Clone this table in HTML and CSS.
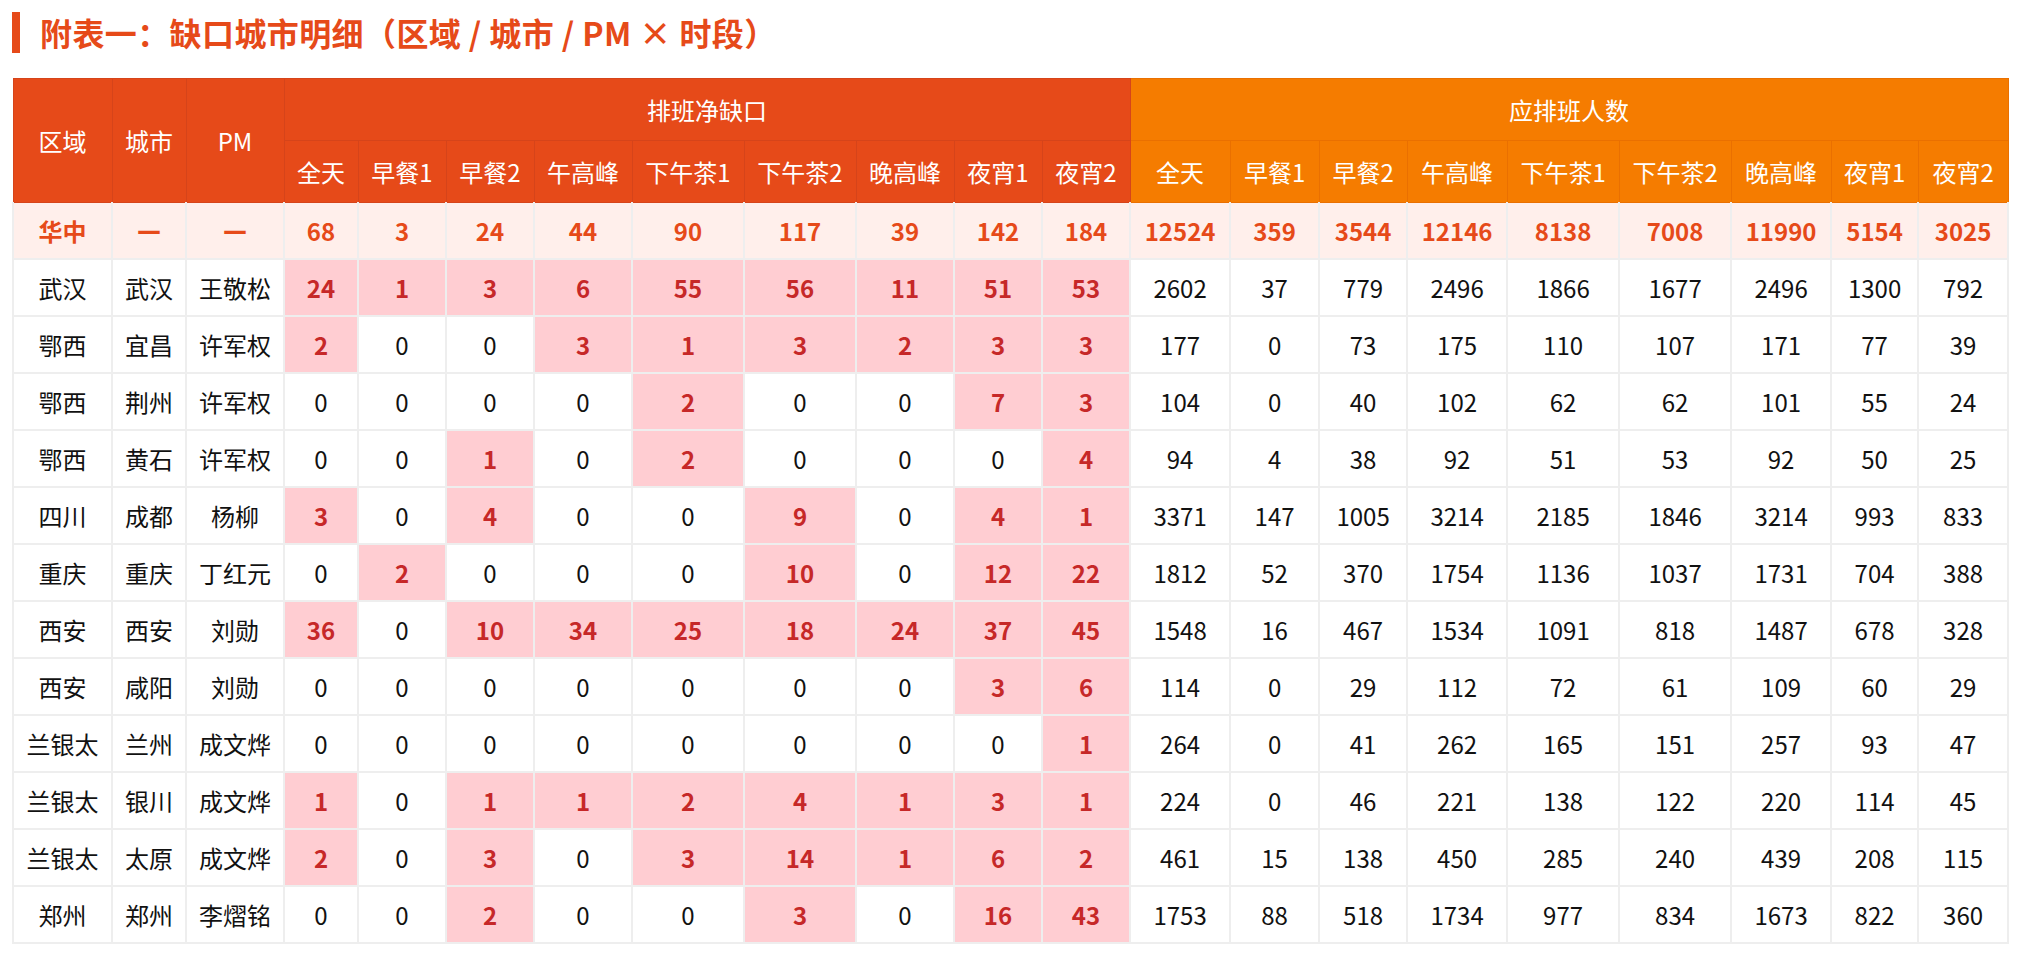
FILE: index.html
```html
<!DOCTYPE html>
<html lang="zh-CN">
<head>
<meta charset="utf-8">
<title>附表一：缺口城市明细</title>
<link rel="stylesheet" href="styles.css">
</head>
<body>
<div class="page">
  <h1 class="section-title">附表一：缺口城市明细（区域 / 城市 / PM × 时段）</h1>
  <table class="gap-table">
    <colgroup>
      <col class="w99"><col class="w74"><col class="w98">
      <col class="w74"><col class="w88"><col class="w88"><col class="w98"><col class="w112"><col class="w112"><col class="w98"><col class="w88"><col class="w88">
      <col class="w100"><col class="w89"><col class="w88"><col class="w100"><col class="w112"><col class="w112"><col class="w100"><col class="w87"><col class="w90">
    </colgroup>
    <thead>
      <tr class="head-top">
        <th class="h-red" rowspan="2">区域</th>
        <th class="h-red" rowspan="2">城市</th>
        <th class="h-red" rowspan="2">PM</th>
        <th class="h-red" colspan="9">排班净缺口</th>
        <th class="h-orange" colspan="9">应排班人数</th>
      </tr>
      <tr class="head-sub">
        <th class="h-red">全天</th><th class="h-red">早餐1</th><th class="h-red">早餐2</th><th class="h-red">午高峰</th><th class="h-red">下午茶1</th><th class="h-red">下午茶2</th><th class="h-red">晚高峰</th><th class="h-red">夜宵1</th><th class="h-red">夜宵2</th>
        <th class="h-orange">全天</th><th class="h-orange">早餐1</th><th class="h-orange">早餐2</th><th class="h-orange">午高峰</th><th class="h-orange">下午茶1</th><th class="h-orange">下午茶2</th><th class="h-orange">晚高峰</th><th class="h-orange">夜宵1</th><th class="h-orange">夜宵2</th>
      </tr>
    </thead>
    <tbody>
      <tr class="total">
        <td>华中</td><td class="dash">—</td><td class="dash">—</td>
        <td>68</td><td>3</td><td>24</td><td>44</td><td>90</td><td>117</td><td>39</td><td>142</td><td>184</td>
        <td>12524</td><td>359</td><td>3544</td><td>12146</td><td>8138</td><td>7008</td><td>11990</td><td>5154</td><td>3025</td>
      </tr>
      <tr>
        <td>武汉</td><td>武汉</td><td>王敬松</td>
        <td class="hit">24</td><td class="hit">1</td><td class="hit">3</td><td class="hit">6</td><td class="hit">55</td><td class="hit">56</td><td class="hit">11</td><td class="hit">51</td><td class="hit">53</td>
        <td>2602</td><td>37</td><td>779</td><td>2496</td><td>1866</td><td>1677</td><td>2496</td><td>1300</td><td>792</td>
      </tr>
      <tr>
        <td>鄂西</td><td>宜昌</td><td>许军权</td>
        <td class="hit">2</td><td>0</td><td>0</td><td class="hit">3</td><td class="hit">1</td><td class="hit">3</td><td class="hit">2</td><td class="hit">3</td><td class="hit">3</td>
        <td>177</td><td>0</td><td>73</td><td>175</td><td>110</td><td>107</td><td>171</td><td>77</td><td>39</td>
      </tr>
      <tr>
        <td>鄂西</td><td>荆州</td><td>许军权</td>
        <td>0</td><td>0</td><td>0</td><td>0</td><td class="hit">2</td><td>0</td><td>0</td><td class="hit">7</td><td class="hit">3</td>
        <td>104</td><td>0</td><td>40</td><td>102</td><td>62</td><td>62</td><td>101</td><td>55</td><td>24</td>
      </tr>
      <tr>
        <td>鄂西</td><td>黄石</td><td>许军权</td>
        <td>0</td><td>0</td><td class="hit">1</td><td>0</td><td class="hit">2</td><td>0</td><td>0</td><td>0</td><td class="hit">4</td>
        <td>94</td><td>4</td><td>38</td><td>92</td><td>51</td><td>53</td><td>92</td><td>50</td><td>25</td>
      </tr>
      <tr>
        <td>四川</td><td>成都</td><td>杨柳</td>
        <td class="hit">3</td><td>0</td><td class="hit">4</td><td>0</td><td>0</td><td class="hit">9</td><td>0</td><td class="hit">4</td><td class="hit">1</td>
        <td>3371</td><td>147</td><td>1005</td><td>3214</td><td>2185</td><td>1846</td><td>3214</td><td>993</td><td>833</td>
      </tr>
      <tr>
        <td>重庆</td><td>重庆</td><td>丁红元</td>
        <td>0</td><td class="hit">2</td><td>0</td><td>0</td><td>0</td><td class="hit">10</td><td>0</td><td class="hit">12</td><td class="hit">22</td>
        <td>1812</td><td>52</td><td>370</td><td>1754</td><td>1136</td><td>1037</td><td>1731</td><td>704</td><td>388</td>
      </tr>
      <tr>
        <td>西安</td><td>西安</td><td>刘勋</td>
        <td class="hit">36</td><td>0</td><td class="hit">10</td><td class="hit">34</td><td class="hit">25</td><td class="hit">18</td><td class="hit">24</td><td class="hit">37</td><td class="hit">45</td>
        <td>1548</td><td>16</td><td>467</td><td>1534</td><td>1091</td><td>818</td><td>1487</td><td>678</td><td>328</td>
      </tr>
      <tr>
        <td>西安</td><td>咸阳</td><td>刘勋</td>
        <td>0</td><td>0</td><td>0</td><td>0</td><td>0</td><td>0</td><td>0</td><td class="hit">3</td><td class="hit">6</td>
        <td>114</td><td>0</td><td>29</td><td>112</td><td>72</td><td>61</td><td>109</td><td>60</td><td>29</td>
      </tr>
      <tr>
        <td>兰银太</td><td>兰州</td><td>成文烨</td>
        <td>0</td><td>0</td><td>0</td><td>0</td><td>0</td><td>0</td><td>0</td><td>0</td><td class="hit">1</td>
        <td>264</td><td>0</td><td>41</td><td>262</td><td>165</td><td>151</td><td>257</td><td>93</td><td>47</td>
      </tr>
      <tr>
        <td>兰银太</td><td>银川</td><td>成文烨</td>
        <td class="hit">1</td><td>0</td><td class="hit">1</td><td class="hit">1</td><td class="hit">2</td><td class="hit">4</td><td class="hit">1</td><td class="hit">3</td><td class="hit">1</td>
        <td>224</td><td>0</td><td>46</td><td>221</td><td>138</td><td>122</td><td>220</td><td>114</td><td>45</td>
      </tr>
      <tr>
        <td>兰银太</td><td>太原</td><td>成文烨</td>
        <td class="hit">2</td><td>0</td><td class="hit">3</td><td>0</td><td class="hit">3</td><td class="hit">14</td><td class="hit">1</td><td class="hit">6</td><td class="hit">2</td>
        <td>461</td><td>15</td><td>138</td><td>450</td><td>285</td><td>240</td><td>439</td><td>208</td><td>115</td>
      </tr>
      <tr>
        <td>郑州</td><td>郑州</td><td>李熠铭</td>
        <td>0</td><td>0</td><td class="hit">2</td><td>0</td><td>0</td><td class="hit">3</td><td>0</td><td class="hit">16</td><td class="hit">43</td>
        <td>1753</td><td>88</td><td>518</td><td>1734</td><td>977</td><td>834</td><td>1673</td><td>822</td><td>360</td>
      </tr>
    </tbody>
  </table>
</div>
</body>
</html>
```
FILE: styles.css
```css
html, body {
  margin: 0;
  padding: 0;
  background: #ffffff;
}

body {
  font-family: "Noto Sans CJK SC", "Noto Sans", sans-serif;
  color: #111111;
}

.page {
  padding: 12px 12px 0 12px;
}

.section-title {
  margin: 0 0 25px 0;
  padding-left: 20px;
  border-left: 8px solid #e64a19;
  font-size: 32px;
  line-height: 41px;
  font-weight: 700;
  color: #e64a19;
  letter-spacing: 0.4px;
}

.gap-table {
  width: 1995px;
  table-layout: fixed;
  border-collapse: collapse;
  font-size: 24px;
  text-align: center;
}

.w74 { width: 74px; }
.w87 { width: 87px; }
.w88 { width: 88px; }
.w89 { width: 89px; }
.w90 { width: 90px; }
.w98 { width: 98px; }
.w99 { width: 99px; }
.w100 { width: 100px; }
.w112 { width: 112px; }

.gap-table th {
  font-weight: 400;
  color: #ffffff;
  padding: 0;
  white-space: nowrap;
}

.head-top { height: 62px; }
.head-sub { height: 62px; }

.h-red {
  background: #e64a19;
  border: 1px solid #d6441a;
}

.h-orange {
  background: #f57c00;
  border: 1px solid #ea7000;
}

.gap-table td {
  height: 55px;
  padding: 0;
  border: 2px solid #eeeeee;
  white-space: nowrap;
  color: #111111;
}

.gap-table tr.total td {
  background: #ffefeb;
  color: #e64a19;
  font-weight: 700;
  border-top-style: none;
}

.gap-table tr.total td.dash {
  font-family: "DejaVu Sans", sans-serif;
  font-weight: 700;
}

.gap-table td.hit {
  background: #ffcdd2;
  color: #c62828;
  font-weight: 700;
}
```
